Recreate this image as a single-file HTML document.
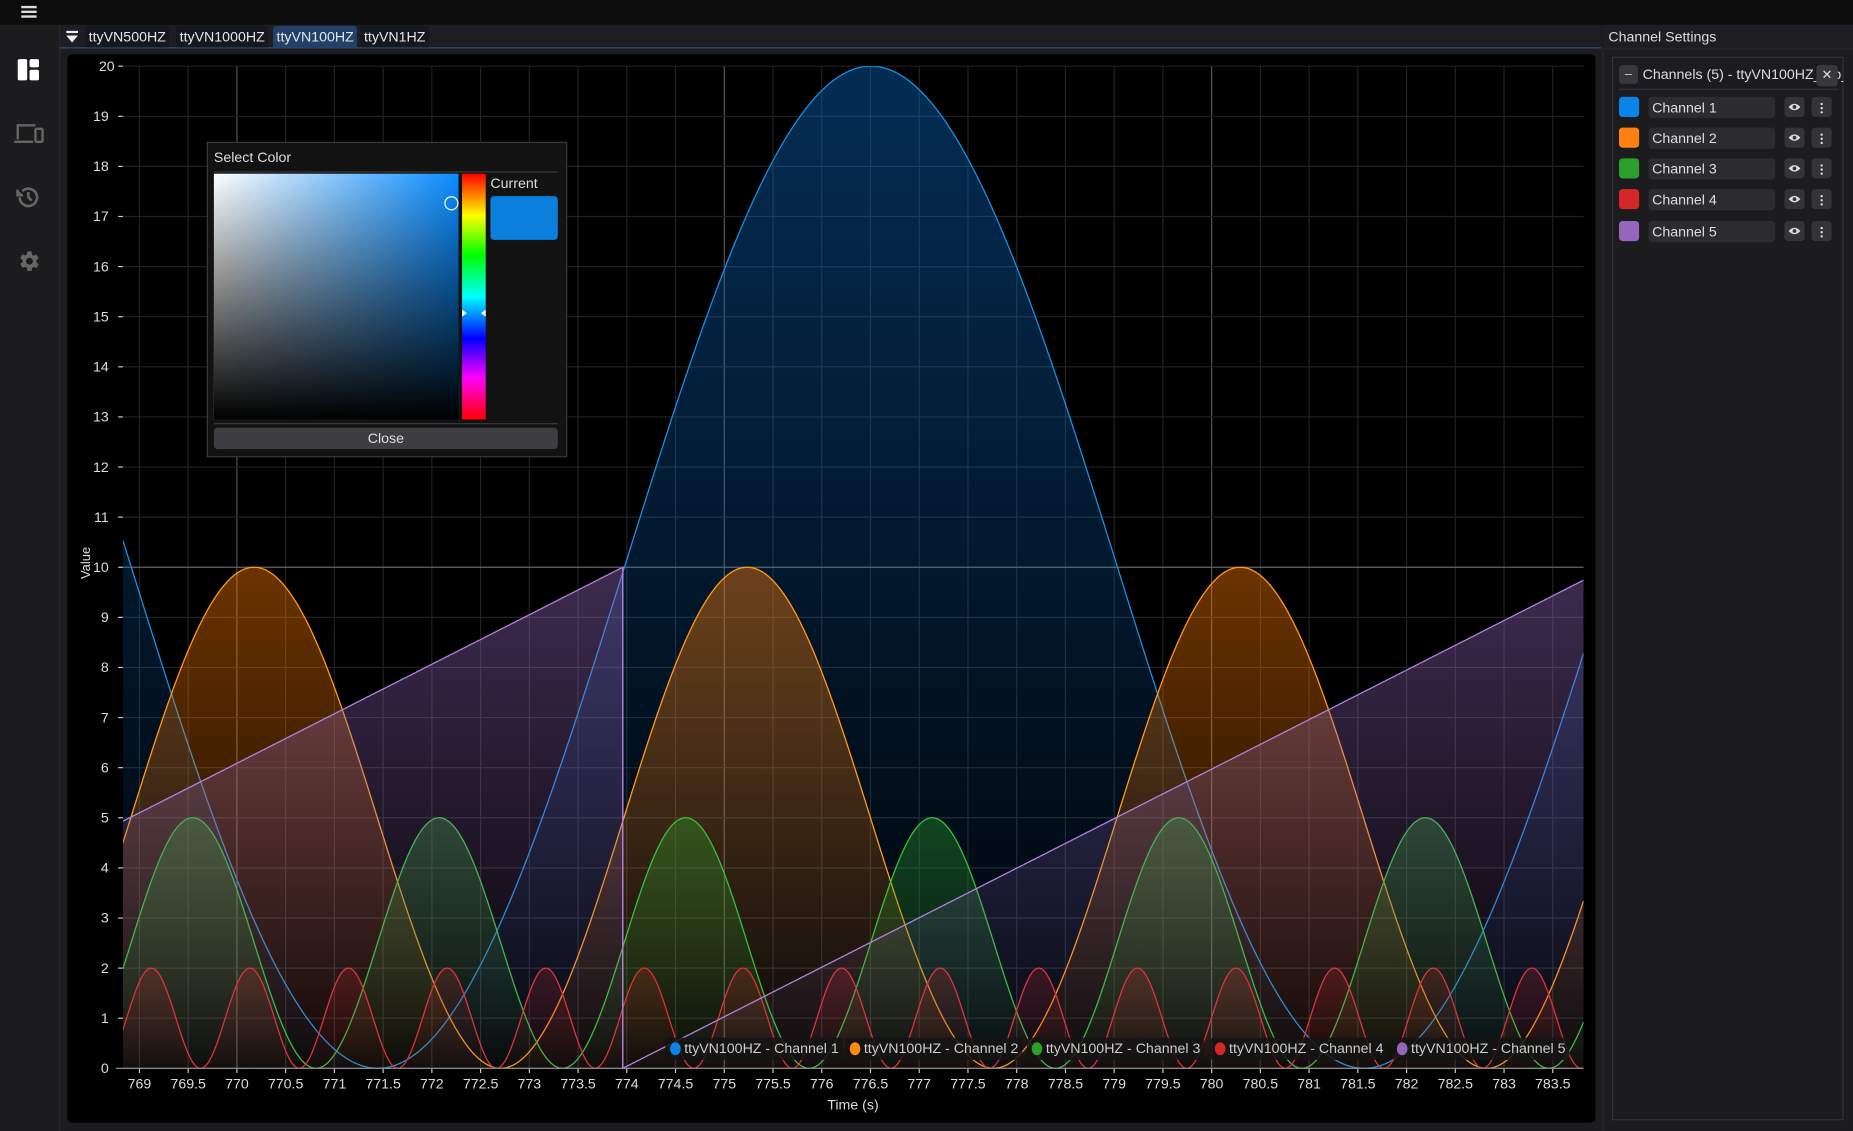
<!DOCTYPE html>
<html><head><meta charset="utf-8">
<style>
html,body{margin:0;padding:0;background:#1c1c1f;overflow:hidden;width:1853px;height:1131px}
#root{position:absolute;left:0;top:0;width:1568px;height:957px;transform:scale(1.18176);transform-origin:0 0;font-family:"Liberation Sans",sans-serif;color:#ddd;background:#1c1c1f}
.abs{position:absolute}
.tab{position:absolute;top:22px;height:18px;line-height:18px;font-size:12px;color:#e6e6e6;background:#15181f;padding:0 3px;border-radius:2px 2px 0 0}
.ch{position:absolute;left:1370px;width:180px;height:20px}
.sw{position:absolute;left:0;top:0;width:17px;height:17px;border-radius:3px}
.nm{position:absolute;left:25px;top:0;width:107px;height:18px;background:#2c2c30;border-radius:3px;font-size:12px;line-height:18px;padding-left:3px;color:#ddd;box-sizing:border-box}
.bt{position:absolute;top:0;width:17px;height:17px;background:#333338;border-radius:3px}
.bt svg{position:absolute;left:3px;top:5px}
.lg{position:absolute;top:878px;height:19px;background:rgba(20,20,20,.85);border-radius:3px;font-size:12px;line-height:19px;color:#ccc;padding:0 3px 0 16px;white-space:nowrap}
.lg i{position:absolute;left:4px;top:4px;width:9px;height:11px;border-radius:50%}
</style></head><body>
<div id="root">
<div class="abs" style="left:0;top:0;width:1568px;height:21px;background:#0c0c0d"></div>
<div class="abs" style="left:18px;top:5px;width:13px;height:2px;background:#ddd;box-shadow:0 4px 0 #ddd,0 8px 0 #ddd"></div>
<div class="abs" style="left:0;top:21px;width:50px;height:936px;background:#1c1c1f;border-right:1px solid #2a2a2e"></div>
<svg class="abs" style="left:14px;top:49px" width="20" height="20" viewBox="0 0 20 20"><rect x="1" y="1" width="8" height="18" rx="1.5" fill="#fff"/><rect x="11" y="1" width="8" height="7" rx="1.5" fill="#fff"/><rect x="11" y="10" width="8" height="9" rx="1.5" fill="#fff"/></svg>
<svg class="abs" style="left:12px;top:104px" width="26" height="18" viewBox="0 0 26 18" fill="none" stroke="#666" stroke-width="2"><path d="M3 14V2h15M0 16h16"/><rect x="18" y="5" width="6" height="11" rx="1"/></svg>
<svg class="abs" style="left:13px;top:156px" width="22" height="22" viewBox="0 0 24 24" fill="none" stroke="#666" stroke-width="2.4"><path d="M4 12a8 8 0 1 0 2.5-5.8"/><path d="M2 5v5h5" fill="#666"/><path d="M12 7v5l3 3"/></svg>
<svg class="abs" style="left:13px;top:210px" width="22" height="22" viewBox="0 0 24 24"><path fill="#666" d="M19.4 13a7.5 7.5 0 0 0 0-2l2.1-1.6-2-3.5-2.5 1a7 7 0 0 0-1.7-1L15 3h-4l-.4 2.7a7 7 0 0 0-1.7 1l-2.5-1-2 3.5L6.6 11a7.5 7.5 0 0 0 0 2l-2.1 1.6 2 3.5 2.5-1a7 7 0 0 0 1.7 1L11 21h4l.4-2.7a7 7 0 0 0 1.7-1l2.5 1 2-3.5z"/><circle cx="13" cy="12" r="3.2" fill="#1c1c1f"/></svg>
<div class="abs" style="left:51px;top:21px;width:1304px;height:19px;background:#1e1e22;border-bottom:1px solid #2b4f7a"></div>
<svg class="abs" style="left:56px;top:26px" width="10" height="11"><rect x="0" y="0" width="10" height="2" fill="#eee"/><path d="M0 4h10L5 10z" fill="#eee"/></svg>
<div class="tab" style="left:72px">ttyVN500HZ</div>
<div class="tab" style="left:149px">ttyVN1000HZ</div>
<div class="tab" style="left:231px;background:#21406a">ttyVN100HZ</div>
<div class="tab" style="left:305px">ttyVN1HZ</div>
<div class="abs" style="left:57px;top:46px;width:1293px;height:904px;background:#000;border-radius:4px"></div>
<svg id="ch" class="abs" style="left:0;top:0" width="1568" height="957"></svg>
<div class="abs" style="left:62px;top:473px;font-size:11px;color:#ddd;transform:rotate(-90deg);transform-origin:center;width:22px;text-align:center">Value</div>
<div class="abs" style="left:700px;top:928px;font-size:12px;color:#ddd">Time (s)</div>
<div class="lg" style="left:563px"><i style="background:#0a84e8"></i>ttyVN100HZ - Channel 1</div>
<div class="lg" style="left:715px"><i style="background:#ff8a16"></i>ttyVN100HZ - Channel 2</div>
<div class="lg" style="left:869px"><i style="background:#2ca02c"></i>ttyVN100HZ - Channel 3</div>
<div class="lg" style="left:1024px"><i style="background:#d62728"></i>ttyVN100HZ - Channel 4</div>
<div class="lg" style="left:1178px"><i style="background:#9467bd"></i>ttyVN100HZ - Channel 5</div>
<!-- color picker -->
<div class="abs" style="left:175px;top:120px;width:303px;height:265px;background:#121212;border:1px solid #3a3a3a"></div>
<div class="abs" style="left:181px;top:126px;font-size:12px;color:#ddd">Select Color</div>
<div class="abs" style="left:181px;top:145px;width:291px;height:1px;background:#3a3a3a"></div>
<div class="abs" style="left:181px;top:147px;width:207px;height:208px;background:linear-gradient(to bottom,rgba(0,0,0,0),#000),linear-gradient(to right,#fff,#0a8cff)"></div>
<div class="abs" style="left:376px;top:166px;width:10px;height:10px;border:1.5px solid #fff;border-radius:50%"></div>
<div class="abs" style="left:391px;top:147px;width:20px;height:208px;background:linear-gradient(to bottom,#f00,#ff0 17%,#0f0 33%,#0ff 50%,#00f 67%,#f0f 83%,#f00)"></div>
<div class="abs" style="left:391px;top:262px;width:0;height:0;border-left:4px solid #fff;border-top:3px solid transparent;border-bottom:3px solid transparent"></div>
<div class="abs" style="left:407px;top:262px;width:0;height:0;border-right:4px solid #fff;border-top:3px solid transparent;border-bottom:3px solid transparent"></div>
<div class="abs" style="left:415px;top:148px;font-size:12px;color:#ddd">Current</div>
<div class="abs" style="left:415px;top:166px;width:57px;height:37px;background:#0a7fde;border-radius:3px"></div>
<div class="abs" style="left:181px;top:358px;width:291px;height:1px;background:#3a3a3a"></div>
<div class="abs" style="left:181px;top:362px;width:291px;height:18px;background:#3e3e42;border-radius:3px;font-size:12px;line-height:18px;text-align:center;color:#ddd">Close</div>
<!-- right panel -->
<div class="abs" style="left:1356px;top:21px;width:212px;height:936px;background:#1c1c1f;border-left:1px solid #2a2a2e"></div>
<div class="abs" style="left:1356px;top:21px;width:212px;height:20px;background:#1e1e22;border-bottom:1px solid #2a2a2e"></div>
<div class="abs" style="left:1361px;top:24px;font-size:12px;color:#ddd">Channel Settings</div>
<div class="abs" style="left:1364px;top:48px;width:196px;height:900px;border:1px solid #333;box-sizing:border-box"></div>
<div class="abs" style="left:1370px;top:55px;width:16px;height:16px;background:#38383c;border-radius:3px;color:#ccc;font-size:11px;text-align:center;line-height:16px">–</div>
<div class="abs" style="left:1390px;top:56px;font-size:12px;color:#ddd;white-space:nowrap;width:170px;overflow:hidden">Channels (5) - ttyVN100HZ_a b_</div>
<div class="abs" style="left:1537px;top:55px;width:18px;height:18px;background:#38383c;border-radius:3px;color:#ddd;font-size:11px;text-align:center;line-height:18px">✕</div>
<div class="abs" style="left:1370px;top:75px;width:186px;height:1px;background:#333"></div>
<div id="rows"></div>
</div>
<script>
(function(){
var cols=['#0a84e8','#ff8010','#2ca02c','#d62728','#9467bd'],tops=[82,108,134,160,187],r='';
var eye='<svg width="11" height="7" viewBox="0 0 11 7"><path d="M0.5 3.5Q5.5-2 10.5 3.5Q5.5 9 0.5 3.5z" fill="#ddd"/><circle cx="5.5" cy="3.5" r="1.6" fill="#333338"/></svg>';
var dots='<svg width="11" height="9" viewBox="0 0 11 9"><circle cx="5.5" cy="1" r="1" fill="#ddd"/><circle cx="5.5" cy="4.5" r="1" fill="#ddd"/><circle cx="5.5" cy="8" r="1" fill="#ddd"/></svg>';
for(var i=0;i<5;i++)r+='<div class="ch" style="top:'+tops[i]+'px"><div class="sw" style="background:'+cols[i]+'"></div><div class="nm">Channel '+(i+1)+'</div><div class="bt" style="left:140px">'+eye+'</div><div class="bt" style="left:163px">'+dots.replace('top:5px','')+'</div></div>';
document.getElementById('rows').outerHTML=r;
var s=document.getElementById('ch'),h='';
var L=104,R=1340,T=56,B=904,P=83.45;
function X(t){return 118+(t-769)*82.48}
function Y(v){return B-v*42.4}
var defs='<defs><clipPath id="cp"><rect x="'+L+'" y="'+T+'" width="'+(R-L)+'" height="'+(B-T)+'"/></clipPath>';
var C=Math.cos,PI2=2*Math.PI;
var ser=[
 ['#1a8fe0','#0a6fd0',function(x){return 10+10*C(PI2*(x-737)/(10*P))},20,.4],
 ['#ff9a1a','#ff7a00',function(x){return 5+5*C(PI2*(x-215)/(5*P))},10,.42],
 ['#38c038','#2ca02c',function(x){return 2.5+2.5*C(PI2*(x-163)/(2.5*P))},5,.38],
 ['#e03030','#d62728',function(x){return 1+C(PI2*(x-128)/P)},2,.22],
 ['#b080e0','#9467bd',function(x){var v=((x-527)/P)%10;return v<0?v+10:v},10,.42]];
ser.forEach(function(a,i){defs+='<linearGradient id="g'+i+'" x1="0" y1="'+Y(a[3])+'" x2="0" y2="'+B+'" gradientUnits="userSpaceOnUse"><stop offset="0" stop-color="'+a[1]+'" stop-opacity="'+a[4]+'"/><stop offset="1" stop-color="'+a[1]+'" stop-opacity="0.03"/></linearGradient>'});
h+=defs+'</defs>';
for(var t=769;t<=783.51;t+=0.5){var x=X(t),br=(Math.abs(t-770)<.01||Math.abs(t-775)<.01||Math.abs(t-780)<.01);
 h+='<line x1="'+x+'" y1="'+T+'" x2="'+x+'" y2="'+B+'" stroke="'+(br?'#555':'#222')+'" stroke-width="1"/>';
 h+='<line x1="'+x+'" y1="'+B+'" x2="'+x+'" y2="'+(B+4)+'" stroke="#ccc"/>';
 h+='<text x="'+x+'" y="'+(B+17)+'" fill="#ddd" font-size="12" text-anchor="middle" font-family="Liberation Sans">'+t+'</text>';}
for(var v=0;v<=20;v++){var y=Y(v);
 h+='<line x1="'+L+'" y1="'+y+'" x2="'+R+'" y2="'+y+'" stroke="'+(v==10?'#666':'#222')+'"/>';
 if(v>0)h+='<line x1="'+(L-4)+'" y1="'+y+'" x2="'+L+'" y2="'+y+'" stroke="#ccc"/>';
 h+='<text x="'+(v==20?97:92)+'" y="'+(y+4)+'" fill="#ddd" font-size="12" text-anchor="end" font-family="Liberation Sans">'+v+'</text>';}
h+='<line x1="527" y1="'+Y(10)+'" x2="527" y2="'+B+'" stroke="#b080e0" stroke-width="1.2"/>';
h+='<g clip-path="url(#cp)">';
ser.forEach(function(a,i){var p='',f;
 for(var x=L;x<=R;x+=0.75){
  if(i==4&&x<527&&x+0.75>=527){p+='L527,'+Y(10)+'L527,'+Y(0);continue;}
  p+=(x==L?'M':'L')+x.toFixed(2)+','+Y(a[2](x)).toFixed(1);}
 f=p+'L'+R+','+B+'L'+L+','+B+'Z';
 h+='<path d="'+f+'" fill="url(#g'+i+')"/>';
 h+='<path d="'+p+'" fill="none" stroke="'+a[0]+'" stroke-width="1.1"/>';});
h+='</g><line x1="'+(L-6)+'" y1="'+B+'" x2="'+R+'" y2="'+B+'" stroke="#999"/>';
s.innerHTML=h;
})();
</script>
</body></html>
